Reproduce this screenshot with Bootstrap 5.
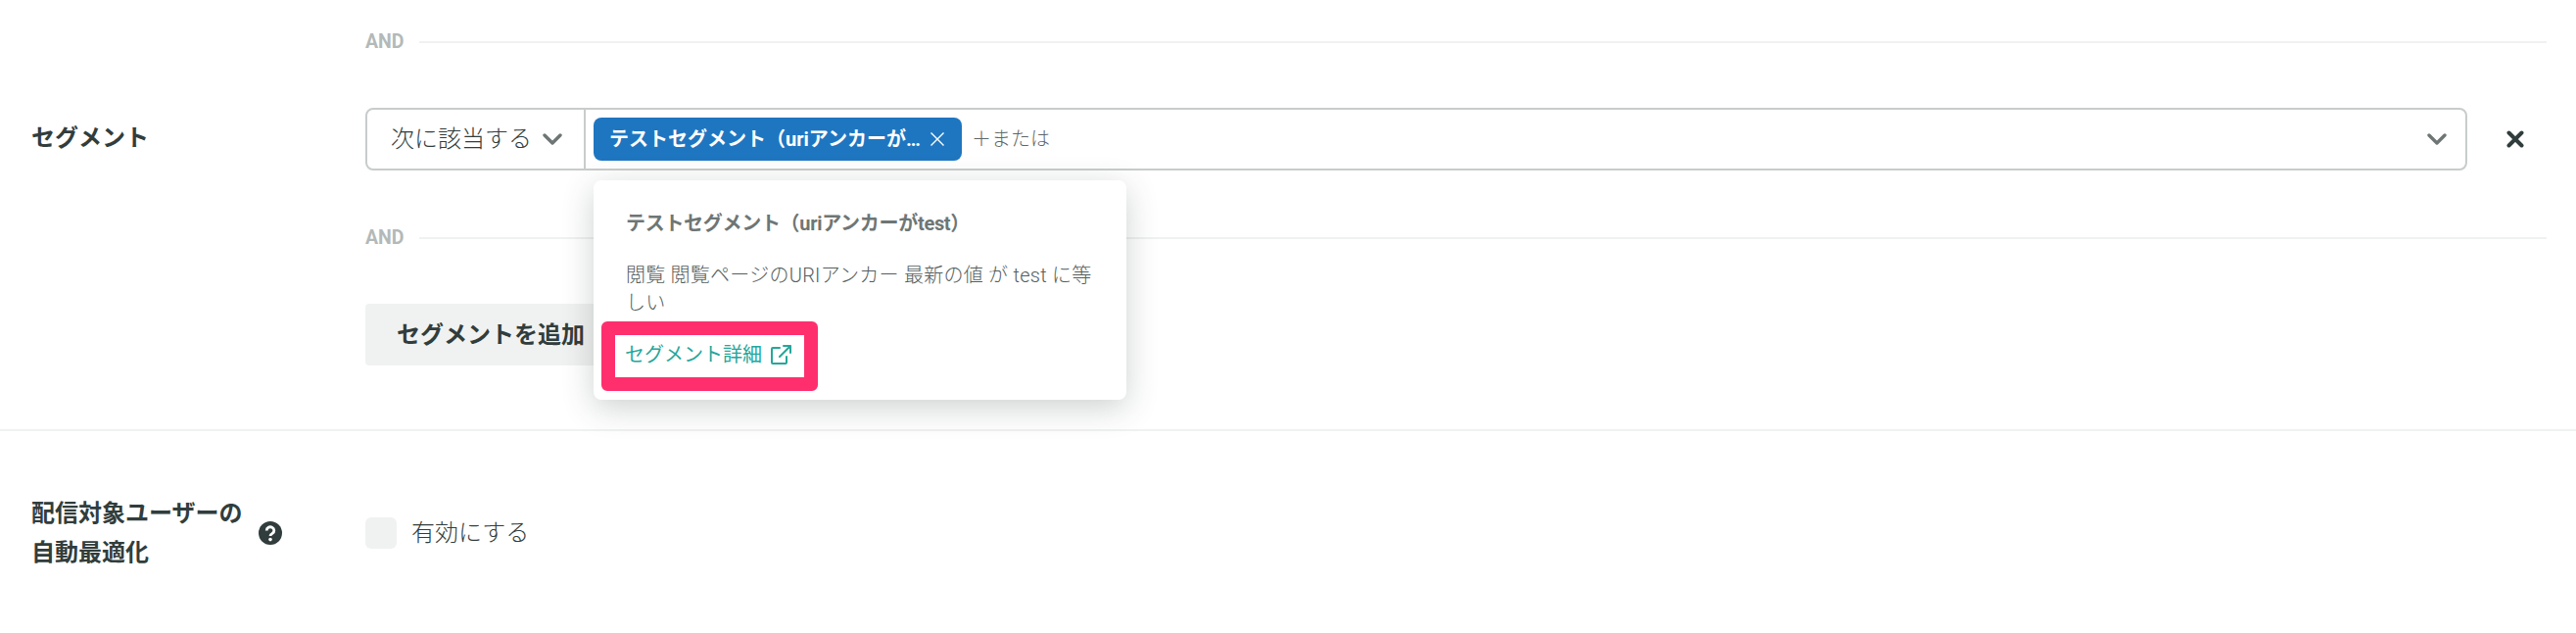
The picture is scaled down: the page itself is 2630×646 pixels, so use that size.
<!DOCTYPE html>
<html lang="ja">

<head>
    <meta charset="UTF-8">
    <title>セグメント</title>
    <link href="https://cdn.jsdelivr.net/npm/bootstrap@5.3.0/dist/css/bootstrap.min.css" rel="stylesheet">
    <style>
        body {
            background-color: #fff;
            color: #313d3d;
            font-family: Roboto, "Noto Sans CJK JP", sans-serif;
            font-size: 24px;
            overflow: hidden;
        }

        .seg-section {
            padding: 30px 30px 65px 32px;
            border-bottom: 2px solid #f0f1f1;
        }

        .auto-section {
            padding: 64px 30px 0 32px;
        }

        .label-col {
            width: 341px;
            flex-shrink: 0;
        }

        .field-label {
            font-weight: 700;
            line-height: 40px;
        }

        .seg-row .field-label {
            margin-bottom: 3px;
        }

        .and-row {
            height: 26px;
            margin-left: 341px;
            color: #b4b9b8;
            font-size: 19.5px;
            font-weight: 700;
        }

        .and-line {
            height: 2px;
            background-color: #f0f1f1;
            margin-left: 15px;
        }

        .and-gap {
            margin-top: 56px;
        }

        .seg-row {
            margin-top: 54px;
        }

        .seg-select {
            height: 64px;
            width: 2146px;
            border: 2px solid #c8cccc;
            border-radius: 8px;
        }

        .match-part {
            width: 223px;
            padding-left: 24px;
            border-right: 2px solid #c8cccc;
            color: #313d3d;
            font-weight: 300;
        }

        .match-part svg {
            margin-left: 11px;
        }

        .seg-chip-wrap {
            margin-left: 8px;
        }

        .seg-chip {
            width: 376px;
            height: 44px;
            padding-left: 16px;
            background-color: #1f76c0;
            border-radius: 8px;
            color: #fff;
            font-size: 20px;
            font-weight: 700;
        }

        .seg-chip-text {
            width: 321px;
        }

        .seg-chip svg {
            margin-left: 6px;
        }

        .or-add {
            margin-left: 10px;
            color: #5f6766;
            font-size: 20px;
            font-weight: 300;
        }

        .select-arrow {
            margin-right: 19px;
        }

        .remove-icon {
            margin-left: 40px;
        }

        .seg-popover {
            top: 64px;
            left: 0;
            width: 544px;
            height: 224px;
            padding: 30px 33px 11px;
            background-color: #fff;
            border-radius: 8px;
            box-shadow: 0 8px 32px rgba(49, 61, 61, 0.24);
            color: #6e7675;
            font-size: 20px;
            font-weight: 400;
            line-height: 28px;
            z-index: 10;
        }

        .pop-title {
            font-weight: 700;
            letter-spacing: -0.3px;
        }

        .pop-body {
            margin-top: 25px;
            color: #555e5d;
            font-weight: 300;
            letter-spacing: 0.25px;
        }

        .pop-highlight {
            width: 221px;
            margin: 5px 0 0 -25px;
            border: 14px solid #ff2f6e;
            border-radius: 6px;
        }

        .pop-link {
            height: 43px;
            padding: 0 0 3px 10px;
            color: #26a69a;
        }

        .pop-link svg {
            margin-left: 9px;
        }

        .add-btn {
            width: 256px;
            height: 63px;
            margin: 54px 0 0 341px;
            padding: 0;
            background-color: #f0f2f1;
            border: 0;
            border-radius: 4px;
            color: #313d3d;
            font-size: 24px;
            font-weight: 700;
        }

        .help-icon {
            margin-left: 16px;
        }

        .enable-check {
            width: 32px;
            height: 32px;
            margin: 0;
            background-color: #f0f2f1;
            border: 0;
            border-radius: 6px;
        }

        .enable-label {
            margin-left: 15px;
            color: #313d3d;
            font-weight: 300;
        }
    </style>
</head>

<body>
    <div class="seg-section">
        <div class="d-flex align-items-center and-row">
            <span>AND</span>
            <div class="and-line flex-grow-1"></div>
        </div>

        <div class="d-flex align-items-center seg-row">
            <div class="label-col field-label">セグメント</div>
            <div class="seg-select d-flex align-items-center">
                <div class="match-part d-flex align-items-center h-100">
                    <span>次に該当する</span>
                    <svg width="20" height="12" viewBox="0 0 20 12" fill="none" stroke="#6e7675" stroke-width="3.4" stroke-linecap="round" stroke-linejoin="round"><path d="M2 2l8 8 8-8"/></svg>
                </div>
                <div class="seg-chip-wrap position-relative">
                    <div class="seg-chip d-flex align-items-center">
                        <span class="seg-chip-text text-truncate">テストセグメント（uriアンカーがtest）</span>
                        <svg width="16" height="16" viewBox="0 0 16 16" fill="none" stroke="#fff" stroke-width="1.4"><path d="M1.5 1.5l13 13M14.5 1.5l-13 13"/></svg>
                    </div>
                    <div class="seg-popover position-absolute">
                        <div class="pop-title">テストセグメント（uriアンカーがtest）</div>
                        <div class="pop-body">閲覧 閲覧ページのURIアンカー 最新の値 が test に等しい</div>
                        <div class="pop-highlight">
                            <a href="#" class="pop-link d-flex align-items-center text-decoration-none">
                                <span>セグメント詳細</span>
                                <svg width="21" height="20" viewBox="0 0 21 20" fill="none" stroke="#26a69a" stroke-width="2" stroke-linecap="round" stroke-linejoin="round"><path d="M9 3H2a1 1 0 0 0-1 1v14a1 1 0 0 0 1 1h13a1 1 0 0 0 1-1v-6M20 1l-11 11M13 1h7v7"/></svg>
                            </a>
                        </div>
                    </div>
                </div>
                <span class="or-add">＋または</span>
                <svg class="select-arrow ms-auto" width="20" height="12" viewBox="0 0 20 12" fill="none" stroke="#6e7675" stroke-width="3.4" stroke-linecap="round" stroke-linejoin="round"><path d="M2 2l8 8 8-8"/></svg>
            </div>
            <svg class="remove-icon" width="18" height="18" viewBox="0 0 18 18" fill="none" stroke="#313d3d" stroke-width="4" stroke-linecap="round"><path d="M2.5 2.5l13 13M15.5 2.5l-13 13"/></svg>
        </div>

        <div class="d-flex align-items-center and-row and-gap">
            <span>AND</span>
            <div class="and-line flex-grow-1"></div>
        </div>

        <button type="button" class="btn add-btn d-block">セグメントを追加</button>
    </div>

    <div class="auto-section d-flex align-items-center">
        <div class="label-col d-flex align-items-center">
            <div class="field-label">配信対象ユーザーの<br>自動最適化</div>
            <svg class="help-icon" width="24" height="24" viewBox="0 0 24 24"><circle cx="12" cy="12" r="12" fill="#313d3d"/><path d="M8.2 9.4a3.8 3.6 0 1 1 5.9 3c-1.4.9-2.1 1.4-2.1 2.7" fill="none" stroke="#fff" stroke-width="2.8"/><circle cx="12" cy="18.6" r="1.8" fill="#fff"/></svg>
        </div>
        <input class="form-check-input enable-check" type="checkbox" id="enableAuto">
        <label class="enable-label" for="enableAuto">有効にする</label>
    </div>

    <script src="https://cdn.jsdelivr.net/npm/bootstrap@5.3.0/dist/js/bootstrap.bundle.min.js"></script>
</body>

</html>
